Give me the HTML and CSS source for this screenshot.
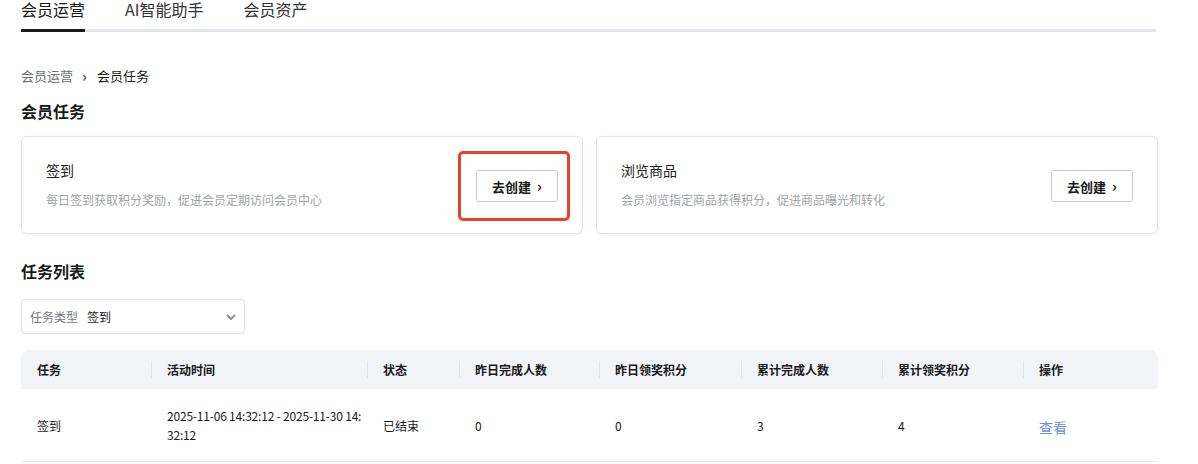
FILE: index.html
```html
<!DOCTYPE html>
<html lang="zh-CN">
<head>
  <meta charset="UTF-8" />
  <meta name="viewport" content="width=device-width, initial-scale=1.0" />
  <title>会员任务</title>
  <link rel="stylesheet" href="styles.css">
</head>
<body>

  <div class="page">
    <nav class="tabs">
      <a class="tab active">会员运营</a>
      <a class="tab">AI智能助手</a>
      <a class="tab">会员资产</a>
    </nav>

    <div class="breadcrumb">
      <span class="crumb-link">会员运营</span>
      <span class="crumb-sep">›</span>
      <span class="crumb-current">会员任务</span>
    </div>

    <h2 class="section-title">会员任务</h2>

    <div class="cards">
      <div class="card">
        <div class="card-text">
          <div class="card-title">签到</div>
          <div class="card-desc">每日签到获取积分奖励，促进会员定期访问会员中心</div>
        </div>
        <button class="create-btn">去创建 <span class="arrow">›</span></button>
        <div class="highlight"></div>
      </div>
      <div class="card">
        <div class="card-text">
          <div class="card-title">浏览商品</div>
          <div class="card-desc">会员浏览指定商品获得积分，促进商品曝光和转化</div>
        </div>
        <button class="create-btn">去创建 <span class="arrow">›</span></button>
      </div>
    </div>

    <h2 class="section-title list-title">任务列表</h2>

    <div class="filter">
      <span class="filter-label">任务类型</span>
      <span class="filter-value">签到</span>
      <svg class="chevron" width="12" height="12" viewBox="0 0 12 12">
        <path d="M2.5 4.5 L6 8 L9.5 4.5" fill="none" stroke="#8a8f99" stroke-width="1.8" stroke-linecap="round" stroke-linejoin="round"/>
      </svg>
    </div>

    <table class="task-table">
      <colgroup>
        <col style="width:130px">
        <col style="width:216px">
        <col style="width:92px">
        <col style="width:140px">
        <col style="width:142px">
        <col style="width:141px">
        <col style="width:141px">
        <col>
      </colgroup>
      <thead>
        <tr>
          <th>任务</th>
          <th>活动时间</th>
          <th>状态</th>
          <th>昨日完成人数</th>
          <th>昨日领奖积分</th>
          <th>累计完成人数</th>
          <th>累计领奖积分</th>
          <th>操作</th>
        </tr>
      </thead>
      <tbody>
        <tr>
          <td>签到</td>
          <td class="time">2025-11-06 14:32:12 - 2025-11-30 14:32:12</td>
          <td>已结束</td>
          <td>0</td>
          <td>0</td>
          <td>3</td>
          <td>4</td>
          <td><a class="view-link">查看</a></td>
        </tr>
      </tbody>
    </table>
  </div>

</body>
</html>
```

FILE: styles.css
```css
body {
  font-family: "Noto Sans CJK SC", "Noto Sans", sans-serif;
  background: #ffffff;
  color: #1f2329;
  margin: 0;
  padding: 0;
}

.page {
  width: 1137px;
  padding: 0 21px;
}

.tabs {
  display: flex;
  gap: 40px;
  margin-top: -2px;
  width: 1135px;
  border-bottom: 3px solid #e1e4eb;
}

.tab {
  font-size: 16px;
  line-height: 22px;
  padding-bottom: 9px;
  margin-bottom: -3px;
  border-bottom: 3px solid transparent;
  color: #333;
}

.tab.active {
  color: #1a1a1a;
  border-bottom-color: #1a1a1a;
}

.breadcrumb {
  margin-top: 34px;
  font-size: 13px;
  line-height: 20px;
  display: flex;
  align-items: center;
}

.crumb-link {
  color: #6b6f76;
}

.crumb-sep {
  font-weight: bold;
  color: #555;
  margin: 0 10px 0 9px;
  font-size: 15px;
}

.crumb-current {
  color: #1a1a1a;
}

.section-title {
  font-size: 16px;
  font-weight: bold;
  line-height: 22px;
  margin: 14px 0 0;
  color: #1a1a1a;
}

.cards {
  display: flex;
  gap: 13px;
  margin-top: 14px;
}

.card {
  position: relative;
  flex: 1;
  height: 96px;
  border: 1px solid #dfe2e8;
  border-radius: 6px;
  box-shadow: 0 1px 4px rgba(0, 0, 0, 0.05);
  display: flex;
  align-items: center;
  justify-content: space-between;
  padding: 0 24px;
}

.card-title {
  font-size: 14px;
  line-height: 20px;
  color: #1a1a1a;
}

.card-desc {
  margin-top: 10px;
  font-size: 12px;
  line-height: 20px;
  color: #a0a3a8;
}

.create-btn {
  width: 82px;
  height: 32px;
  margin-top: 1px;
  border: 1px solid #c6c9cf;
  border-radius: 3px;
  background: #fff;
  font-family: inherit;
  font-size: 13px;
  font-weight: bold;
  color: #1a1a1a;
  padding: 0;
  cursor: pointer;
}

.create-btn .arrow {
  margin-left: 3px;
  font-size: 15px;
}

.highlight {
  position: absolute;
  left: 436px;
  top: 14px;
  width: 106px;
  height: 64px;
  border: 3px solid #e8412c;
  border-radius: 5px;
}

.list-title {
  margin-top: 26px;
}

.filter {
  margin-top: 17px;
  width: 206px;
  height: 33px;
  border: 1px solid #dcdfe6;
  border-radius: 4px;
  display: flex;
  align-items: center;
  padding: 0 8px;
  font-size: 12px;
}

.filter-label {
  color: #777b82;
}

.filter-value {
  margin-left: 9px;
  color: #1a1a1a;
  flex: 1;
}

.chevron {
  margin-right: -1px;
}

.task-table {
  margin-top: 16px;
  width: 1137px;
  border-collapse: separate;
  border-spacing: 0;
  table-layout: fixed;
  font-size: 12px;
}

.task-table th {
  background: #f2f3f7;
  height: 39px;
  padding: 0 16px;
  text-align: left;
  font-weight: bold;
  color: #1a1a1a;
  position: relative;
}

.task-table th + th::before {
  content: "";
  position: absolute;
  left: 0;
  top: 11px;
  height: 17px;
  width: 1px;
  background: #e3e5ea;
}

.task-table th:first-child {
  border-top-left-radius: 8px;
}

.task-table th:last-child {
  border-top-right-radius: 8px;
}

.task-table td {
  height: 72px;
  padding: 0 16px;
  border-bottom: 1px solid #e8eaef;
  color: #1a1a1a;
  line-height: 19px;
}

.task-table td.time {
  padding-right: 2px;
  letter-spacing: -0.2px;
  word-break: break-all;
}

.view-link {
  font-size: 14px;
  color: #6c8fd6;
  cursor: pointer;
  position: relative;
  top: 2px;
}
```
